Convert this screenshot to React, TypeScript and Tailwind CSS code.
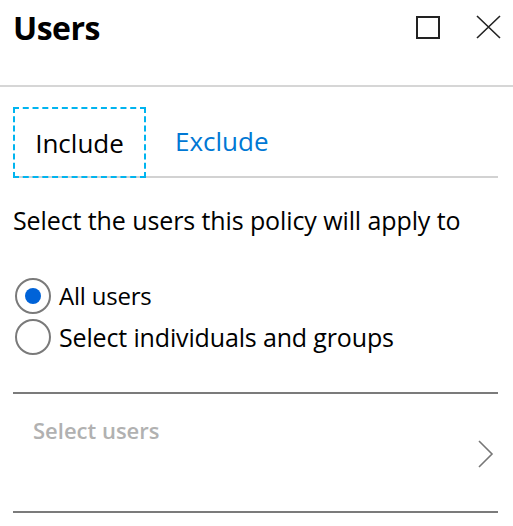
import React from "react";

export default function App() {
  return (
    <div className="w-[513px] h-[526px] bg-white overflow-hidden" style={{ fontFamily: '"Open Sans", "Noto Sans", sans-serif' }}>
      {/* Header */}
      <div className="h-[85px] flex items-start justify-between pl-[13px] pr-[12px] pt-[5px]">
        <h1 className="text-[32px] font-bold text-black leading-[46px] tracking-[-0.5px]">Users</h1>
        <div className="flex items-center gap-[36px] pt-[10px]">
          <div className="w-[24px] h-[23px] border-[2px] border-[#222]" />
          <svg width="25" height="24" viewBox="0 0 25 24">
            <path d="M1 1 L24 23 M24 1 L1 23" stroke="#222" strokeWidth="1.6" fill="none" />
          </svg>
        </div>
      </div>
      <div className="h-[2px] bg-[#d6d6d6]" />

      {/* Tabs */}
      <div className="mt-[20px] mx-[13px] mr-[15px] flex items-end border-b-[2px] border-[#d2d2d2] h-[71px]">
        <div className="w-[133px] h-[71px] -mb-[2px] border-[2px] border-dashed border-[#00b4ef] flex items-center justify-center">
          <span className="text-[26px] text-black leading-none pt-[0px]">Include</span>
        </div>
        <div className="h-[71px] flex items-center pl-[29px] pb-[2px]">
          <span className="text-[26px] text-[#0078d4] leading-none pt-[2px]">Exclude</span>
        </div>
      </div>

      {/* Description */}
      <div className="mt-[27px] px-[13px] text-[25px] text-black leading-[30px] tracking-[-0.1px]">
        Select the users this policy will apply to
      </div>

      {/* Radios */}
      <div className="mt-[43px] px-[15px] flex flex-col gap-[5px]">
        <label className="flex items-center gap-[8px] h-[36px]">
          <span className="w-[36px] h-[36px] rounded-full border-[2px] border-[#7a7a7a] flex items-center justify-center">
            <span className="w-[16px] h-[16px] rounded-full bg-[#0063d8]" />
          </span>
          <span className="text-[24px] text-black leading-none tracking-[-0.2px]">All users</span>
        </label>
        <label className="flex items-center gap-[8px] h-[36px]">
          <span className="w-[36px] h-[36px] rounded-full border-[2px] border-[#7a7a7a]" />
          <span className="text-[25px] text-black leading-none tracking-[-0.15px]">Select individuals and groups</span>
        </label>
      </div>

      {/* Selector */}
      <div className="mt-[37px] mx-[13px] mr-[15px] h-[121px] border-t-[2px] border-b-[2px] border-[#7b7b7b] flex items-center justify-between pl-[20px] pr-[4px]">
        <span className="self-start mt-[21px] text-[22px] font-semibold text-[#b1b1b1] leading-[30px] tracking-[0px]">Select users</span>
        <svg width="16" height="28" viewBox="0 0 16 28" className="mt-[3px]">
          <path d="M1 1 L14 14 L1 27" stroke="#777" strokeWidth="1.6" fill="none" />
        </svg>
      </div>
    </div>
  );
}
